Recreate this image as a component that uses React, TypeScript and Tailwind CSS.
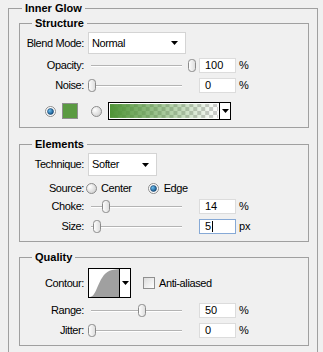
import React from 'react';

const font = { fontFamily: '"Liberation Sans", Arial, sans-serif' };

function GroupBox({ title, className, children }: { title: string; className?: string; children: React.ReactNode }) {
  return (
    <fieldset className={`border border-[#a0a0a0] ${className ?? ''}`}>
      <legend className="ml-[12px] px-[3px] text-[11px] font-bold leading-[13px] text-black">{title}</legend>
      {children}
    </fieldset>
  );
}

function Label({ children }: { children: React.ReactNode }) {
  return <div className="w-[64px] shrink-0 text-right text-[11px] leading-[13px] tracking-[-0.4px] text-black">{children}</div>;
}

function Arrow() {
  return (
    <svg width="7" height="4" viewBox="0 0 7 4">
      <path d="M0 0H7L3.5 4Z" fill="#000" />
    </svg>
  );
}

function Dropdown({ value, width, height }: { value: string; width: string; height: string }) {
  return (
    <div className={`ml-[4px] flex items-center justify-between border border-[#d4d4d4] bg-white pl-[3px] pr-[7px] ${width} ${height}`}>
      <span className="text-[11px] leading-[13px] tracking-[-0.4px] text-black">{value}</span>
      <Arrow />
    </div>
  );
}

function Slider({ value }: { value: number }) {
  return (
    <div className="relative ml-[3px] h-full w-[109px]">
      <div className="absolute left-[4px] right-[14px] top-[7px] h-[2px] border-t border-[#b4b4b4] border-b border-b-white" />
      <svg
        className="absolute top-[1px]"
        style={{ left: 1 + value }}
        width="8"
        height="13"
        viewBox="0 0 8 13"
      >
        <defs>
          <linearGradient id="thumb" x1="0" y1="0" x2="1" y2="0">
            <stop offset="0" stopColor="#ffffff" />
            <stop offset="1" stopColor="#dcdcdc" />
          </linearGradient>
        </defs>
        <rect x="0.5" y="0.5" width="7" height="12" rx="3" fill="url(#thumb)" stroke="#8a8a8a" />
      </svg>
    </div>
  );
}

function NumInput({ value, focused }: { value: string; focused?: boolean }) {
  return (
    <div
      className={`ml-[3px] flex h-[15px] w-[37px] items-center border bg-white pl-[5px] text-[11px] leading-[13px] text-black ${
        focused ? 'border-[#86a9d6]' : 'border-[#dcdcdc]'
      }`}
    >
      {value}
      {focused && <span className="ml-[1px] h-[11px] w-[1px] bg-black" />}
    </div>
  );
}

function SliderRow({ label, value, text, unit, mt, focused }: { label: string; value: number; text: string; unit: string; mt: string; focused?: boolean }) {
  return (
    <div className={`flex h-[15px] items-center ${mt}`}>
      <Label>{label}</Label>
      <Slider value={value} />
      <NumInput value={text} focused={focused} />
      <span className="ml-[3px] text-[11px] leading-[13px] text-black">{unit}</span>
    </div>
  );
}

function Radio({ checked, className }: { checked?: boolean; className?: string }) {
  return (
    <svg className={className} width="11" height="11" viewBox="0 0 11 11">
      <defs>
        <radialGradient id="rfill" cx="0.35" cy="0.35" r="0.7">
          <stop offset="0" stopColor="#ffffff" />
          <stop offset="1" stopColor="#d0d0d0" />
        </radialGradient>
        <radialGradient id="rdot" cx="0.35" cy="0.35" r="0.7">
          <stop offset="0" stopColor="#6fc0f0" />
          <stop offset="1" stopColor="#0d4f86" />
        </radialGradient>
      </defs>
      <circle cx="5.5" cy="5.5" r="5" fill={checked ? '#ffffff' : 'url(#rfill)'} stroke="#8c8c8c" />
      {checked && <circle cx="5.5" cy="5.5" r="3" fill="url(#rdot)" stroke="#1b3f66" strokeWidth="0.6" />}
    </svg>
  );
}

function GradientBar() {
  return (
    <div className="ml-[6px] flex h-[18px] w-[123px] border border-black bg-white">
      <svg width="110" height="16" viewBox="0 0 110 16" className="ml-[1px]">
        <defs>
          <pattern id="checker" width="8" height="8" patternUnits="userSpaceOnUse">
            <rect width="8" height="8" fill="#ffffff" />
            <rect width="4" height="4" fill="#cccccc" />
            <rect x="4" y="4" width="4" height="4" fill="#cccccc" />
          </pattern>
          <linearGradient id="glow" x1="0" y1="0" x2="1" y2="0">
            <stop offset="0" stopColor="#4f9437" stopOpacity="1" />
            <stop offset="1" stopColor="#4f9437" stopOpacity="0" />
          </linearGradient>
        </defs>
        <rect x="0" y="1" width="109" height="14" fill="url(#checker)" />
        <rect x="0" y="1" width="109" height="14" fill="url(#glow)" />
      </svg>
      <div className="flex w-[11px] items-center justify-center border-l border-black">
        <Arrow />
      </div>
    </div>
  );
}

function Contour() {
  return (
    <div className="ml-[4px] flex h-[30px] w-[43px] border border-black bg-white">
      <svg width="30" height="28" viewBox="0 0 30 28">
        <path d="M1 28 C9 27 9 4 23 1 L30 0 L30 28 Z" fill="#a0a0a0" />
      </svg>
      <div className="flex flex-1 items-center justify-center border-l border-black">
        <Arrow />
      </div>
    </div>
  );
}

export default function App() {
  return (
    <div className="h-[352px] w-[323px] overflow-hidden bg-[#f0f0f0] pt-[2px]" style={font}>
      <fieldset className="ml-[8px] w-[310px] border border-[#a0a0a0]">
        <legend className="ml-[13px] px-[3px] text-[11px] font-bold leading-[13px] text-black">Inner Glow</legend>
        <div className="pb-[20px] pl-[10px] pr-[8px] pt-[2px]">
          <GroupBox title="Structure" className="pb-[7px]">
            <div className="mt-[2px] flex h-[22px] items-center">
              <Label>Blend Mode:</Label>
              <Dropdown value="Normal" width="w-[98px]" height="h-[22px]" />
            </div>
            <SliderRow label="Opacity:" value={100} text="100" unit="%" mt="mt-[4px]" />
            <SliderRow label="Noise:" value={0} text="0" unit="%" mt="mt-[5px]" />
            <div className="mt-[9px] flex h-[18px] items-center">
              <Radio checked className="ml-[25px]" />
              <div className="ml-[6px] h-[16px] w-[16px] border border-[#8f8f8f] bg-[#5a9a41]" />
              <Radio className="ml-[13px]" />
              <GradientBar />
            </div>
          </GroupBox>

          <GroupBox title="Elements" className="mt-[10px] pb-[7px]">
            <div className="mt-[2px] flex h-[23px] items-center">
              <Label>Technique:</Label>
              <Dropdown value="Softer" width="w-[69px]" height="h-[23px]" />
            </div>
            <div className="mt-[5px] flex h-[14px] items-center">
              <Label>Source:</Label>
              <Radio className="ml-[2px]" />
              <span className="ml-[4px] text-[11px] leading-[13px] tracking-[-0.4px] text-black">Center</span>
              <Radio checked className="ml-[16px]" />
              <span className="ml-[5px] text-[11px] leading-[13px] tracking-[-0.4px] text-black">Edge</span>
            </div>
            <SliderRow label="Choke:" value={14} text="14" unit="%" mt="mt-[4px]" />
            <SliderRow label="Size:" value={5} text="5" unit="px" mt="mt-[5px]" focused />
          </GroupBox>

          <GroupBox title="Quality" className="mt-[9px] pb-[7px]">
            <div className="mt-[4px] flex h-[30px] items-center">
              <Label>Contour:</Label>
              <Contour />
              <div className="ml-[12px] h-[12px] w-[12px] border border-[#8f8f8f] bg-gradient-to-br from-[#dcdcdc] to-[#ffffff]" />
              <span className="ml-[4px] text-[11px] leading-[13px] tracking-[-0.4px] text-black">Anti-aliased</span>
            </div>
            <SliderRow label="Range:" value={50} text="50" unit="%" mt="mt-[5px]" />
            <SliderRow label="Jitter:" value={0} text="0" unit="%" mt="mt-[5px]" />
          </GroupBox>
        </div>
      </fieldset>
    </div>
  );
}
